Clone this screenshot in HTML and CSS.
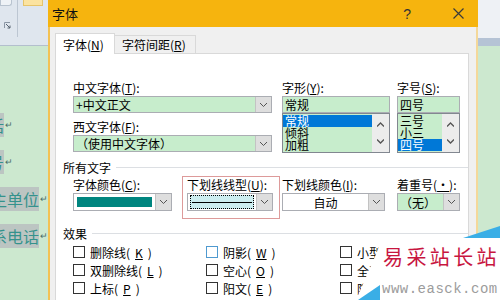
FILE: index.html
```html
<!DOCTYPE html>
<html lang="zh-CN">
<head>
<meta charset="utf-8">
<title>字体</title>
<link rel="stylesheet" href="styles.css">
</head>
<body>
<div class="screen">
  <div class="side-left">
    <div class="ribbon">
      <div class="rb-a">
        <div class="rb-btn"></div>
        <svg class="launcher" width="7" height="7" viewBox="0 0 7 7"><path d="M0.5 6V0.5H6" fill="none" stroke="#8a96a4"/><path d="M2 2L6 6M3.5 6H6V3.5" fill="none" stroke="#56626f"/></svg>
      </div>
      <div class="rb-sep"></div>
      <div class="rb-yellow"></div>
    </div>
    <div class="doc">
      <div class="ln p1"><span class="hl">话</span><span class="ret">↵</span></div>
      <div class="ln p2"><span class="hl">号</span><span class="ret">↵</span></div>
      <div class="ln p3"><span class="hl">主单位</span><span class="ret">↵</span></div>
      <div class="ln p4"><span class="hl">系电话</span><span class="ret">↵</span></div>
    </div>
  </div>

  <div class="dialog">
    <div class="titlebar">
      <span class="ttl">字体</span>
      <span class="help">?</span>
      <svg class="close" width="11" height="11" viewBox="0 0 11 11"><path d="M0.5 0.5L10.5 10.5M10.5 0.5L0.5 10.5" stroke="#3a3a3a" stroke-width="1.2"/></svg>
    </div>
    <div class="dbody">
      <div class="tabs">
        <div class="tab active">字体(<u>N</u>)</div>
        <div class="tab">字符间距(<u>R</u>)</div>
      </div>
      <div class="panel">
        <div class="fontgrid">
          <div class="lbl c1 r1">中文字体(<u>T</u>):</div>
          <div class="lbl c3 r1">字形(<u>Y</u>):</div>
          <div class="lbl c5 r1">字号(<u>S</u>):</div>

          <div class="field green c1 r2"><span class="txt">+中文正文</span><span class="dd"><svg width="7" height="4" viewBox="0 0 7 4"><polyline points="0,0 3.5,3.5 7,0" fill="none" stroke="#555"/></svg></span></div>
          <div class="field green c3 r2"><span class="txt">常规</span></div>
          <div class="field green c5 r2"><span class="txt">四号</span></div>

          <div class="lbl c1 r3">西文字体(<u>F</u>):</div>
          <div class="field green c1 r4"><span class="txt">（使用中文字体）</span><span class="dd"><svg width="7" height="4" viewBox="0 0 7 4"><polyline points="0,0 3.5,3.5 7,0" fill="none" stroke="#555"/></svg></span></div>

          <div class="list c3 r34">
            <div class="items">
              <div class="item sel">常规</div>
              <div class="item">倾斜</div>
              <div class="item">加粗</div>
            </div>
            <div class="sb">
              <svg width="7" height="5" viewBox="0 0 7 5"><polyline points="0,4.5 3.5,1 7,4.5" fill="none" stroke="#555" stroke-width="1.3"/></svg>
              <svg width="7" height="5" viewBox="0 0 7 5"><polyline points="0,0.5 3.5,4 7,0.5" fill="none" stroke="#555" stroke-width="1.3"/></svg>
            </div>
          </div>
          <div class="list c5 r34">
            <div class="items">
              <div class="item">三号</div>
              <div class="item">小三</div>
              <div class="item sel">四号</div>
            </div>
            <div class="sb">
              <svg width="7" height="5" viewBox="0 0 7 5"><polyline points="0,4.5 3.5,1 7,4.5" fill="none" stroke="#555" stroke-width="1.3"/></svg>
              <svg width="7" height="5" viewBox="0 0 7 5"><polyline points="0,0.5 3.5,4 7,0.5" fill="none" stroke="#555" stroke-width="1.3"/></svg>
            </div>
          </div>
        </div>

        <div class="group">所有文字</div>

        <div class="row2">
          <div class="col colA">
            <div class="lbl">字体颜色(<u>C</u>):</div>
            <div class="field sel2 white"><span class="swatch"></span><span class="dd"><svg width="7" height="4" viewBox="0 0 7 4"><polyline points="0,0 3.5,3.5 7,0" fill="none" stroke="#555"/></svg></span></div>
          </div>
          <div class="col colB">
            <div class="lbl">下划线线型(<u>U</u>):</div>
            <div class="field sel2 white"><span class="ulfield"><span class="ulline"></span></span><span class="dd"><svg width="7" height="4" viewBox="0 0 7 4"><polyline points="0,0 3.5,3.5 7,0" fill="none" stroke="#555"/></svg></span></div>
          </div>
          <div class="col colC">
            <div class="lbl">下划线颜色(<u>I</u>):</div>
            <div class="field sel2 white"><span class="txt center">自动</span><span class="dd"><svg width="7" height="4" viewBox="0 0 7 4"><polyline points="0,0 3.5,3.5 7,0" fill="none" stroke="#555"/></svg></span></div>
          </div>
          <div class="col colD">
            <div class="lbl">着重号(<u>·</u>):</div>
            <div class="field sel2 green"><span class="txt">（无）</span><span class="dd"><svg width="7" height="4" viewBox="0 0 7 4"><polyline points="0,0 3.5,3.5 7,0" fill="none" stroke="#555"/></svg></span></div>
          </div>
        </div>

        <div class="group">效果</div>

        <div class="checks">
          <label class="chk"><span class="box"></span>删除线(<u>K</u>)</label>
          <label class="chk"><span class="box focus"></span>阴影(<u>W</u>)</label>
          <label class="chk"><span class="box"></span>小型大写字母(<u>M</u>)</label>
          <label class="chk"><span class="box"></span>双删除线(<u>L</u>)</label>
          <label class="chk"><span class="box"></span>空心(<u>O</u>)</label>
          <label class="chk"><span class="box"></span>全部大写字母(<u>A</u>)</label>
          <label class="chk"><span class="box"></span>上标(<u>P</u>)</label>
          <label class="chk"><span class="box"></span>阳文(<u>E</u>)</label>
          <label class="chk"><span class="box"></span>隐藏(<u>H</u>)</label>
          <label class="chk"><span class="box"></span>下标(<u>B</u>)</label>
          <label class="chk"><span class="box"></span>阴文(<u>G</u>)</label>
          <label class="chk"><span class="box"></span></label>
        </div>
      </div>
    </div>
  </div>

  <div class="side-right">
    <div class="sr-top"></div>
    <div class="sr-bar"></div>
    <div class="sr-doc"></div>
  </div>
</div>

<div class="wm">
  <svg class="wm-bg" width="144" height="74" viewBox="0 0 144 74">
    <polygon points="27,12 144,12 144,74 0,74" fill="#ffffff"/>
    <polygon points="107,12 144,0 144,12" fill="#3aaee6"/>
    <polygon points="2,74 24,59 24,74" fill="#3aaee6"/>
  </svg>
  <div class="wm-title">易采站长站</div>
  <div class="wm-url">www.easck.com</div>
</div>
</body>
</html>
```

FILE: styles.css
```css
* { box-sizing: border-box; }
html, body { margin: 0; padding: 0; }
body {
  width: 500px;
  height: 300px;
  overflow: hidden;
  position: relative;
  background: #cce8cf;
  font-family: "Noto Sans CJK SC", "Noto Sans", sans-serif;
  font-size: 12px;
  color: #000;
}
u { text-decoration: underline; text-underline-offset: 1px; }

.screen {
  display: grid;
  grid-template-columns: 48px 430px 22px;
  height: 300px;
}

/* left: word window behind */
.side-left { display: flex; flex-direction: column; overflow: hidden; }
.ribbon {
  height: 46px;
  background: #dfe6ee;
  border-bottom: 1px solid #b3bfcd;
  display: flex;
  align-items: flex-start;
}
.rb-a { width: 17px; display: flex; flex-direction: column; }
.rb-btn {
  width: 12px; height: 6px;
  background: #eef2f6;
  border: 1px solid #b8c3cf;
  border-top: none;
  border-radius: 0 0 3px 0;
}
.launcher { margin: 16px 0 0 4px; }
.rb-sep { width: 1px; height: 37px; background: #bcc6d2; }
.rb-yellow {
  width: 20px; height: 6px;
  margin-left: 5px;
  background: #fbe3a0;
  border: 1px solid #e6c46a;
  border-top: none;
}
.doc { padding-top: 60px; }
.ln {
  height: 37px;
  display: flex;
  justify-content: flex-end;
  align-items: center;
  white-space: nowrap;
  font-size: 16px;
  color: #34928c;
}
.p1, .p2 { padding-right: 35px; }
.p3, .p4 { padding-right: 0; }
.hl { background: #bcc5c2; line-height: 24px; }
.ret { font-size: 9px; color: #4a6d6a; margin-left: 1px; align-self: center; }

/* dialog */
.dialog {
  height: 300px;
  display: flex;
  flex-direction: column;
  background: #f0f0f0;
  overflow: hidden;
}
.titlebar {
  height: 27px;
  flex: none;
  background: #f6b40e;
  display: flex;
  align-items: center;
  padding-left: 4px;
}
.ttl { flex: 1; font-size: 13px; color: #111; }
.help { font-family: "Liberation Sans", sans-serif; font-size: 14px; color: #333; margin-right: 42px; }
.close { margin-right: 14px; }

.dbody {
  flex: 1;
  display: flex;
  flex-direction: column;
  border-left: 2px solid #f3c253;
  border-right: 2px solid #f4d89a;
  padding: 6px 7px 0 5px;
  min-height: 0;
}
.tabs { display: flex; align-items: flex-end; height: 20px; flex: none; }
.tab {
  height: 18px;
  padding: 0 7px;
  border: 1px solid #d9d9d9;
  border-bottom: none;
  border-left: none;
  background: #f0f0f0;
  display: flex;
  align-items: center;
  white-space: nowrap;
  width: 81px;
}
.tab.active {
  height: 21px;
  width: 60px;
  background: #fff;
  border-left: 1px solid #d9d9d9;
  margin-bottom: -1px;
  position: relative;
  z-index: 1;
  padding-left: 7px;
}
.panel {
  flex: 1;
  background: #fff;
  border: 1px solid #d9d9d9;
  padding: 26px 0 0 17px;
}

.fontgrid {
  display: grid;
  grid-template-columns: 199px 10px 108px 7px 63px;
  grid-template-rows: 16px 17px 22px 18px;
}
.c1 { grid-column: 1; }
.c3 { grid-column: 3; }
.c5 { grid-column: 5; }
.r1 { grid-row: 1; }
.r2 { grid-row: 2; }
.r3 { grid-row: 3; align-self: end; }
.r4 { grid-row: 4; }
.r34 { grid-row: 3 / 5; }

.lbl { font-size: 12px; line-height: 16px; white-space: nowrap; }
.field {
  display: flex;
  align-items: center;
  border: 1px solid #abadb3;
  height: 17px;
  font-size: 12px;
  white-space: nowrap;
  overflow: hidden;
}
.green { background: #c7edcc; }
.white { background: #fff; }
.txt { padding-left: 2px; line-height: 15px; }
.txt.center { flex: 1; text-align: center; padding-left: 0; }
.dd {
  margin-left: auto;
  flex: none;
  width: 16px;
  height: 100%;
  background: #dedede;
  border-left: 1px solid #c3c3c3;
  display: flex;
  align-items: center;
  justify-content: center;
}

.list {
  display: flex;
  border: 1px solid #828790;
  background: #c7edcc;
}
.items { flex: 1; padding-top: 1px; }
.item { height: 12px; line-height: 12px; font-size: 12px; padding-left: 2px; }
.item.sel { background: #0078d7; color: #fff; }
.sb {
  width: 17px;
  background: #ececec;
  display: flex;
  flex-direction: column;
  align-items: center;
  justify-content: space-around;
  padding: 2px 0;
}

.group {
  display: flex;
  align-items: center;
  gap: 5px;
  height: 14px;
  margin: 7px 0 0 -10px;
  font-size: 12px;
  white-space: nowrap;
}
.group::after {
  content: "";
  flex: 1;
  height: 1px;
  background: #dcdfe3;
}

.row2 { display: flex; align-items: flex-start; margin-top: 2px; height: 43px; }
.col { display: flex; flex-direction: column; }
.colA { width: 99px; margin-top: 1px; }
.colB {
  width: 98px;
  margin-left: 10px;
  border: 1px solid #dd9a9a;
  padding: 0 6px 7px 4px;
  height: 43px;
}
.colC { width: 103px; margin-left: 2px; margin-top: 1px; }
.colD { width: 63px; margin-left: 12px; margin-top: 1px; }
.sel2 { height: 18px; }
.swatch {
  flex: 1;
  height: 10px;
  margin: 0 3px;
  background: #00857f;
}
.ulfield {
  flex: 1;
  height: 14px;
  margin: 0 2px;
  border: 1px dotted #000;
  background: #cdeef0;
  display: flex;
  align-items: center;
}
.ulline { flex: 1; height: 1px; background: #000; margin: 0 1px; }

.checks {
  display: grid;
  grid-template-columns: 133px 134px 1fr;
  grid-auto-rows: 18px;
  margin-top: 3px;
}
.chk {
  display: flex;
  align-items: center;
  gap: 5px;
  font-size: 12px;
  white-space: nowrap;
}
.box {
  width: 12px;
  height: 12px;
  border: 1px solid #333;
  background: #fff;
  flex: none;
}
.box.focus { border-color: #4f9ad0; }

/* right side of word window */
.side-right { display: flex; flex-direction: column; }
.sr-top { height: 38px; background: #eef1f5; }
.sr-bar { height: 8px; background: #b5c3d5; }
.sr-doc { flex: 1; background: #cce8cf; }

/* watermark overlay */
.wm {
  position: absolute;
  left: 356px;
  top: 226px;
  width: 144px;
  height: 74px;
  overflow: hidden;
}
.wm-bg { position: absolute; left: 0; top: 0; }
.wm-title {
  position: relative;
  margin-top: 19px;
  padding-left: 27px;
  font-size: 20px;
  line-height: 24px;
  letter-spacing: 3.4px;
  color: #c8163f;
  white-space: nowrap;
}
.wm-url {
  position: relative;
  margin-top: 12px;
  padding-left: 26px;
  font-family: "Liberation Mono", "DejaVu Sans Mono", monospace;
  font-size: 14px;
  line-height: 16px;
  letter-spacing: 0.5px;
  color: #9c9c9c;
  white-space: nowrap;
}
```
